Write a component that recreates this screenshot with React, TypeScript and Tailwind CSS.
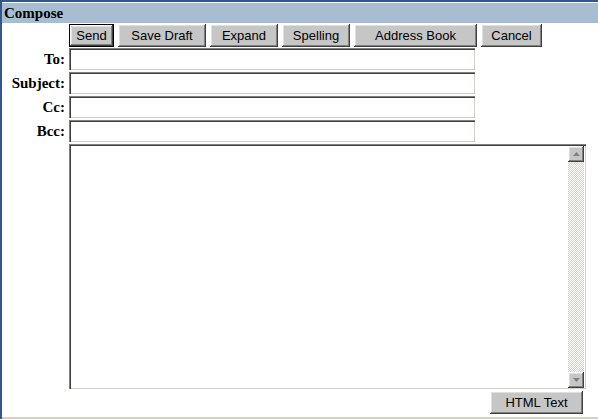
import type { ReactNode } from 'react';

const raised =
    'bg-[#c6c6c6] shadow-[inset_-1px_-1px_#404040,inset_1px_1px_#ffffff,inset_-2px_-2px_#808080,inset_2px_2px_#dfdfdf]';
const sunken =
    'bg-white shadow-[inset_1px_1px_#808080,inset_2px_2px_#404040,inset_-1px_-1px_#d4d0c8]';

function Btn({ children, width, isDefault }: { children: ReactNode; width: string; isDefault?: boolean }) {
    if (isDefault) {
        return (
            <div className={`${width} h-[23px] border border-black flex`}>
                <button className={`${raised} w-full h-full flex items-center justify-center text-[13px] text-black leading-none`}>{children}</button>
            </div>
        );
    }
    return (
        <button className={`${raised} ${width} h-[23px] flex items-center justify-center text-[13px] text-black leading-none`}>{children}</button>
    );
}

function Field({ label }: { label: string }) {
    return (
        <div className="flex items-center h-[22px] mb-[2px]">
            <div className="w-[65px] text-right font-bold text-[15px] pr-[2px] font-['Liberation_Serif',serif]">{label}</div>
            <div className={`${sunken} ml-[2px] w-[406px] h-[22px]`} />
        </div>
    );
}

function ScrollArrow({ up }: { up?: boolean }) {
    return (
        <div className={`${raised} w-[16px] h-[16px] flex items-center justify-center`}>
            <svg width="7" height="4" viewBox="0 0 7 4">
                {up ? <path d="M3.5 0 L7 4 L0 4 Z" fill="#808080" /> : <path d="M0 0 L7 0 L3.5 4 Z" fill="#808080" />}
            </svg>
        </div>
    );
}

export default function App() {
    return (
        <div className="w-[598px] h-[419px] bg-white border-t-2 border-l-2 border-[#35588c] font-['Liberation_Sans',Arial,sans-serif] overflow-hidden">
            <div className="h-[20px] bg-[#a6bdd2] flex items-center pl-[2px] mt-[1px]">
                <span className="font-bold text-[15px] text-black font-['Liberation_Serif',serif]">Compose</span>
            </div>

            <div className="flex gap-[4px] ml-[67px] mt-[1px] mb-[1px]">
                <Btn width="w-[45px]" isDefault>Send</Btn>
                <Btn width="w-[88px]">Save Draft</Btn>
                <Btn width="w-[68px]">Expand</Btn>
                <Btn width="w-[68px]">Spelling</Btn>
                <Btn width="w-[123px]">Address Book</Btn>
                <Btn width="w-[61px]">Cancel</Btn>
            </div>

            <Field label="To:" />
            <Field label="Subject:" />
            <Field label="Cc:" />
            <Field label="Bcc:" />

            <div className={`${sunken} ml-[67px] w-[517px] h-[245px] flex justify-end p-[2px] pb-[1px]`}>
                <div className="w-[16px] h-full flex flex-col bg-[repeating-conic-gradient(#d4d0c8_0_25%,#ffffff_0_50%)] bg-[length:2px_2px]">
                    <ScrollArrow up />
                    <div className="grow" />
                    <ScrollArrow />
                </div>
            </div>

            <div className="flex justify-end w-[581px] mt-[2px]">
                <Btn width="w-[93px]">HTML Text</Btn>
            </div>

            <div className="mt-[3px] h-[2px] bg-[#d4d0c8]" />
        </div>
    );
}
